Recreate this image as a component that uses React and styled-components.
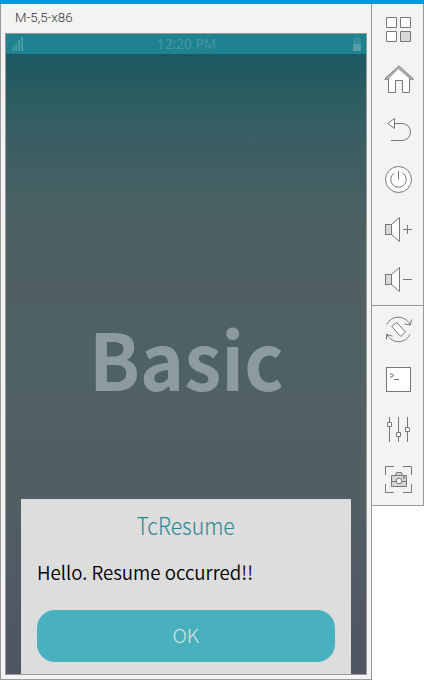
import React from "react";
import styled, { createGlobalStyle } from "styled-components";

const Global = createGlobalStyle`
  * { box-sizing: border-box; }
  body { margin: 0; background: #fff; }
`;

const Page = styled.div`
  width: 424px;
  height: 680px;
  border-top: 4px solid #0096e0;
  display: flex;
  align-items: flex-start;
  font-family: "Noto Sans CJK KR", "Noto Sans", sans-serif;
  overflow: hidden;
`;

const Device = styled.section`
  width: 372px;
  height: 676px;
  padding: 0 4px 4px;
  border: 1px solid #999;
  border-top: 0;
  background: #f3f3f3;
  display: flex;
  flex-direction: column;
`;

const TitleBar = styled.header`
  height: 29px;
  flex: none;
  padding: 4px 0 0 10px;
  font: 300 13px/20px "Roboto", sans-serif;
  color: #333;
`;

const Fit = styled.span`
  display: inline-block;
  white-space: pre;
  transform: scaleX(${(p) => p.$scale || 1});
  transform-origin: ${(p) => p.$origin || "center"};
`;

const Screen = styled.main`
  flex: 1;
  border: 1px solid #999;
  display: flex;
  flex-direction: column;
  background: linear-gradient(#1c5961 20px, #315e63 80px, #415f63 130px, #4a6063 190px, #506062 250px, #506165 330px, #515f63 450px, #505965 560px, #505562 640px);
`;

const StatusBar = styled.div`
  height: 20px;
  flex: none;
  padding: 0 5px 0 6px;
  display: grid;
  grid-template-columns: 60px 1fr 60px;
  align-items: center;
  background: #1e8290;
  color: #4797a2;
  font: 14px/20px "Noto Sans", sans-serif;
  text-align: center;
  svg { display: block; }
  svg:last-child { justify-self: end; }
`;

const Hero = styled.div`
  height: 445px;
  flex: none;
  padding-top: 243px;
  text-align: center;
  font-size: 78px;
  font-weight: 700;
  line-height: 120px;
  color: #8b9b9f;
`;

const Dialog = styled.div`
  width: 330px;
  flex: 1;
  margin-left: 15px;
  padding: 9px 16px 12px;
  background: #ddd;
  display: flex;
  flex-direction: column;
`;

const DialogTitle = styled.h1`
  margin: 0;
  height: 34px;
  font-size: 24px;
  line-height: 34px;
  font-weight: 300;
  text-align: center;
  color: #2a8794;
`;

const Message = styled.p`
  margin: 15px 0 23px;
  height: 30px;
  font-size: 19px;
  line-height: 30px;
  font-weight: 350;
  color: #000;
`;

const OkButton = styled.button`
  width: 298px;
  height: 52px;
  border: 0;
  padding: 0 1px 4px 0;
  border-radius: 18px;
  background: #49b0c0;
  color: #dce1e2;
  font-family: inherit;
  font-size: 19px;
  font-weight: 300;
`;

const Sidebar = styled.aside`
  width: 52px;
  border-right: 1px solid #999;
  background: #f3f3f3;
`;

const Tools = styled.nav`
  height: ${(p) => p.$height}px;
  padding: ${(p) => p.$top}px 0 0 9px;
  border-bottom: 1px solid #999;
  display: flex;
  flex-direction: column;
  gap: 15px;
`;

const Glyph = styled.svg`
  width: 35px;
  height: 35px;
  flex: none;
  fill: none;
  stroke: #777;
  stroke-width: 1;
`;

const Icon = ({ children }) => <Glyph viewBox="0 0 35 35">{children}</Glyph>;

const Speaker = () => (
  <>
    <path d="M10.5 12.5 18.5 5.5V29.5L10.5 22.5Z" fill="#fff" />
    <rect x="4.5" y="12.5" width="6" height="10" fill="#d9d9d9" />
  </>
);

export default function App() {
  return (
    <Page>
      <Global />
      <Device>
        <TitleBar><Fit $scale={1.02} $origin="left">M-5,5-x86</Fit></TitleBar>
        <Screen>
          <StatusBar>
            <svg width="12" height="14" viewBox="0 0 12 14" fill="#4a98a2">
              <path d="M0 10h2v4H0zM3 7h2v7H3zM6 3h2v11H6zM9 0h2v14H9z" />
            </svg>
            <Fit $scale={0.98}>12:20 PM</Fit>
            <svg width="8" height="14" viewBox="0 0 8 14">
              <path d="M2 0h4v1h2v13H0V1h2z" fill="#348c98" />
              <path d="M0 7h8v7H0z" fill="#559ea7" />
            </svg>
          </StatusBar>
          <Hero><Fit $scale={0.96}>Basic</Fit></Hero>
          <Dialog>
            <DialogTitle><Fit $scale={0.885}>TcResume</Fit></DialogTitle>
            <Message><Fit $scale={0.983} $origin="left">Hello. Resume occurred!!</Fit></Message>
            <OkButton><Fit $scale={1.04}>OK</Fit></OkButton>
          </Dialog>
        </Screen>
      </Device>
      <Sidebar>
        <Tools $height={302} $top={8}>
          <Icon>
            <path d="M5.5 5.5h10v10h-10zM19.5 5.5h10v10h-10zM5.5 19.5h10v10h-10z" fill="#fff" />
            <path d="M19.5 19.5h10v10h-10z" fill="#d9d9d9" />
          </Icon>
          <Icon>
            <path d="M7.5 16 17.5 6.5 28.5 16V30.5H21.5V18.5H14.5V30.5H7.5Z" fill="#fff" />
            <path d="M4.5 17 18 5 31.5 17" stroke="#b0b0b0" strokeWidth="2.4" />
            <path d="M3.5 17.3 18 3.8 32.5 17.3M7.5 17.5H3.5M28.5 17.5h4" stroke="#909090" />
          </Icon>
          <Icon>
            <path d="M13.5 6.5V16.5L6.7 11.5Z" fill="#fff" />
            <path d="M13.5 11.5h7.5a8.5 8.5 0 0 1 0 17H10" />
          </Icon>
          <Icon>
            <circle cx="17.5" cy="17.5" r="13" fill="#fff" />
            <path d="M13.5 10.8a7.8 7.8 0 1 0 8 0M17.5 9v8.5" />
          </Icon>
          <Icon><Speaker /><path d="M22 17.5h9M26.5 13v9" /></Icon>
          <Icon><Speaker /><path d="M22 17.5h9" /></Icon>
        </Tools>
        <Tools $height={200} $top={6}>
          <Icon>
            <path d="M15.7 10.5 24.5 20 19.7 24.4 10.7 14.4Z" fill="#fff" />
            <path d="M5.7 12.5C10.5 2.8 24 2.8 29 12.5M30.5 7.5 29.3 13 23.5 12M6 22.5C11 32 24 32 29 22.5M5.5 27.5V22.3L11.5 24.2" />
          </Icon>
          <Icon>
            <rect x="5.5" y="5.5" width="24" height="24" fill="#fff" />
            <path d="M9 11.5 13 13.5 9 15.5M13 17.5h5" />
          </Icon>
          <Icon>
            <path d="M8.5 5v25M17.5 5v25M26.5 5v25" />
            <path d="M6.5 10.5h4v4h-4zM15.5 20.5h4v4h-4zM24.5 15.5h4v4h-4z" fill="#fff" />
          </Icon>
          <Icon>
            <path d="M13 4.5H4.5V13M22 4.5h8.5V13M13 30.5H4.5V22M22 30.5h8.5V22" />
            <path d="M10.5 13.5h4l1-3h5l1 3h4v11h-15z" fill="#d5d5d5" />
            <path d="M14.5 13.5h7M10.5 19.5h15" />
            <circle cx="18" cy="19" r="2.8" fill="#fff" />
            <path d="M22 15.5h2" strokeWidth="2" />
          </Icon>
        </Tools>
      </Sidebar>
    </Page>
  );
}
